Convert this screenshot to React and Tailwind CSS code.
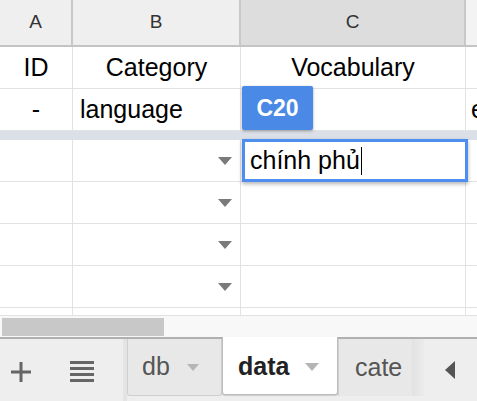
import React from "react";

const font = { fontFamily: '"Liberation Sans", Arial, sans-serif' };

const Arrow = ({ className = "" }) => (
  <svg width="14" height="8" viewBox="0 0 14 8" className={className}>
    <path d="M0 0 L14 0 L7 8 Z" fill="currentColor" />
  </svg>
);

const Row = ({ a, b, c, d, arrow }) => (
  <div className="flex h-[42px] shrink-0 border-b border-[#e2e2e2] text-[25px] text-black">
    <div className="w-[73px] shrink-0 border-r border-[#e2e2e2] flex items-center justify-center">{a}</div>
    <div className="w-[168px] shrink-0 border-r border-[#e2e2e2] flex items-center px-[7px]">
      <span className="flex-1">{b}</span>
      {arrow && <Arrow className="text-[#7a7a7a] mr-[1px]" />}
    </div>
    <div className="w-[225px] shrink-0 border-r border-[#e2e2e2] flex items-center justify-center">{c}</div>
    <div className="flex-1 flex items-center pl-[5px] overflow-hidden">{d}</div>
  </div>
);

export default function App() {
  return (
    <div style={font} className="w-[477px] h-[401px] overflow-hidden bg-white flex flex-col relative select-none">
      {/* column letters */}
      <div className="flex h-[47px] shrink-0 border-b-2 border-[#c4c4c4] text-[19px] text-[#333]">
        <div className="w-[73px] shrink-0 bg-[#efefef] border-r-2 border-[#c8c8c8] flex items-center justify-center">A</div>
        <div className="w-[168px] shrink-0 bg-[#efefef] border-r-2 border-[#c8c8c8] flex items-center justify-center">B</div>
        <div className="w-[225px] shrink-0 bg-[#dddddd] border-r-2 border-[#c8c8c8] flex items-center justify-center">C</div>
        <div className="flex-1 bg-[#f3f3f3]" />
      </div>

      <Row a="ID" b={<span className="block text-center">Category</span>} c="Vocabulary" />
      <Row a="-" b="language" c="" d="e" />

      {/* frozen row divider */}
      <div className="h-[9px] shrink-0 bg-[#dbe0e8]" />

      <Row arrow />
      <Row arrow />
      <Row arrow />
      <Row arrow />
      <div className="flex h-[8px] shrink-0 border-b border-[#e2e2e2]">
        <div className="w-[73px] border-r border-[#e2e2e2]" />
        <div className="w-[168px] border-r border-[#e2e2e2]" />
        <div className="w-[225px] border-r border-[#e2e2e2]" />
      </div>

      {/* horizontal scrollbar */}
      <div className="h-[23px] shrink-0 bg-[#f8f8f8] flex items-center px-[2px] border-b-2 border-[#b0b0b0]">
        <div className="w-[162px] h-[18px] bg-[#c8c8c8]" />
      </div>

      {/* sheet tabs */}
      <div className="flex-1 bg-[#eeeeee] flex text-[25px]">
        <div className="w-[41px] flex items-center justify-center pt-[3px]">
          <svg width="20" height="20" viewBox="0 0 20 20">
            <path d="M8.5 0 H11.5 V8.5 H20 V11.5 H11.5 V20 H8.5 V11.5 H0 V8.5 H8.5 Z" fill="#666" />
          </svg>
        </div>
        <div className="w-[82px] flex items-center justify-center pt-[3px]">
          <div className="w-[24px] flex flex-col gap-[3px]">
            <div className="h-[3px] bg-[#666]" />
            <div className="h-[3px] bg-[#666]" />
            <div className="h-[3px] bg-[#666]" />
            <div className="h-[3px] bg-[#666]" />
          </div>
        </div>
        <div className="w-[4px] bg-[#e4e4e4]" />
        <div className="w-[95px] h-[57px] bg-[#e8e8e8] border border-t-0 border-[#cfcfcf] rounded-b-[3px] flex items-center gap-[17px] pl-[14px] text-[#555]">
          db <Arrow className="text-[#b5b5b5] w-[12px] h-[7px]" />
        </div>
        <div className="w-[116px] h-[58px] -mt-[2px] bg-white border border-t-0 border-[#bdbdbd] rounded-b-[3px] shadow-[0_1px_1px_rgba(0,0,0,0.15)] flex items-center gap-[16px] pl-[15px] pt-[2px] font-bold text-[#222]">
          data <Arrow className="text-[#b5b5b5] w-[14px] h-[8px]" />
        </div>
        <div className="w-[74px] h-[57px] bg-[#e8e8e8] border-l border-[#cfcfcf] flex items-center pl-[16px] text-[#555] overflow-hidden whitespace-nowrap">
          cate
        </div>
        <div className="flex-1 h-[57px] flex">
          <div className="w-[12px] bg-gradient-to-r from-[#e2e2e2] to-[#ebebeb]" />
          <div className="flex-1 flex items-center justify-center pt-[4px] pr-[2px]">
            <svg width="10" height="18" viewBox="0 0 10 18">
              <path d="M10 0 L10 18 L0 9 Z" fill="#555" />
            </svg>
          </div>
        </div>
      </div>

      {/* active cell badge */}
      <div className="absolute left-[242px] top-[86px] w-[71px] h-[44px] bg-[#4a8ae6] rounded-[2px] shadow-[0_1px_3px_rgba(0,0,0,0.35)] flex items-center justify-center text-white font-bold text-[23px]">
        C20
      </div>

      {/* cell editor */}
      <div className="absolute left-[242px] top-[139px] w-[226px] h-[43px] bg-white border-[3px] border-[#4d8ef0] shadow-[0_2px_4px_rgba(0,0,0,0.3)] flex items-center pl-[5px] text-[25px] text-black">
        chính phủ<span className="inline-block w-[1px] h-[28px] bg-black ml-[1px]" />
      </div>
    </div>
  );
}
